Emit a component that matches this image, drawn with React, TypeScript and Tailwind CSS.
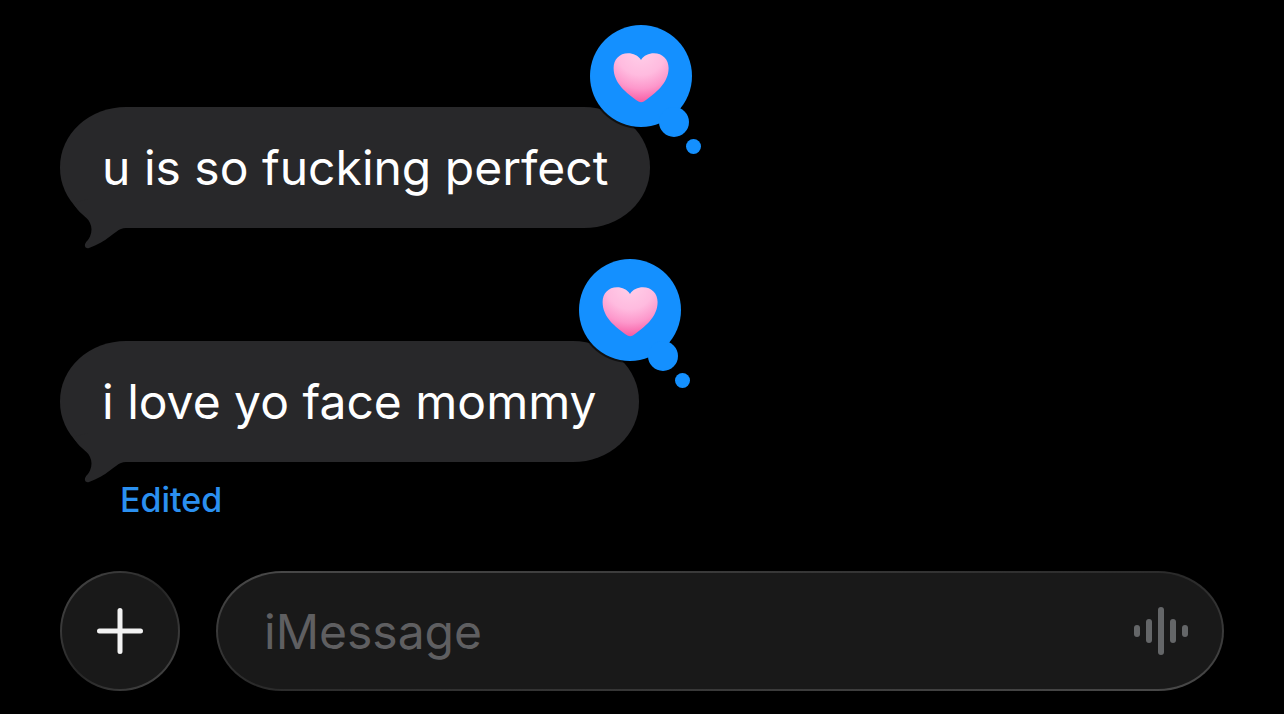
import React from 'react';
import { clsx } from 'clsx';

interface Message {
  text: string;
  edited?: boolean;
}

const messages: Message[] = [
  { text: 'u is so fucking perfect' },
  { text: 'i love yo face mommy', edited: true },
];

const HeartReaction: React.FC<{ id: string }> = ({ id }) => (
  <svg
    role="img"
    aria-label="Heart reaction"
    viewBox="0 0 114 132"
    className="absolute -top-[84px] -right-[52px] h-[132px] w-[114px]"
  >
    <defs>
      <radialGradient id={id} gradientUnits="userSpaceOnUse" cx="53" cy="28" r="54">
        <stop offset="0" stopColor="#ffd0e9" />
        <stop offset="0.45" stopColor="#ffbbdf" />
        <stop offset="0.7" stopColor="#fd97cb" />
        <stop offset="1" stopColor="#f7509c" />
      </radialGradient>
    </defs>
    <circle cx="53" cy="53" r="53" fill="#000" fillOpacity="0.6" />
    <circle cx="53" cy="53" r="51" fill="#1490ff" />
    <circle cx="86" cy="99" r="15" fill="#1490ff" />
    <circle cx="105.5" cy="123.5" r="7.5" fill="#1490ff" />
    <path
      d="M53 37C50 32.5 45.5 30.3 40 30.3C31.5 30.3 25.6 36.5 25.6 45C25.6 60 38 70 50.5 78.5C52.3 79.5 54 79.5 55.800 78.5C68 70 80.6 60 80.6 45C80.6 36.5 74.5 30.3 66 30.3C60.5 30.3 56 32.5 53 37Z"
      fill={`url(#${id})`}
    />
  </svg>
);

const Bubble: React.FC<{ message: Message; id: string }> = ({ message, id }) => (
  <div className="relative rounded-[66px/60px] bg-[#28282a] px-[42px] pt-[31px] pb-[30px]">
    <p className="text-[48px] leading-[60px] text-white">{message.text}</p>
    <svg
      aria-hidden="true"
      viewBox="0 0 70 50"
      className="absolute -bottom-[21px] left-2 h-[50px] w-[70px]"
    >
      <path
        d="M5 4C8 9 11 12.5 14 15C18 18.5 20.5 20.5 22 24C24 28 24 33 22 37.5C20.5 41 18.5 42 17.3 44.5C16 47.500 18 50 21 49C25 47.5 29 45.5 33 43.5C40 39.5 43 36.5 48 33C52 30 54 29 58 29H70V0H20Z"
        fill="#28282a"
      />
    </svg>
    <HeartReaction id={id} />
  </div>
);

const Waveform: React.FC = () => (
  <svg viewBox="0 0 54 48" className="h-12 w-[54px]" fill="#646668" aria-hidden="true">
    <rect x="0" y="18" width="6" height="12" rx="3" />
    <rect x="12" y="12" width="6" height="24" rx="3" />
    <rect x="24" y="0" width="6" height="48" rx="3" />
    <rect x="36" y="12" width="6" height="24" rx="3" />
    <rect x="48" y="18" width="6" height="12" rx="3" />
  </svg>
);

const Composer: React.FC = () => (
  <form className="flex items-center gap-9" onSubmit={(e) => e.preventDefault()}>
    <button
      type="button"
      aria-label="Add attachment"
      className="shrink-0 rounded-full bg-[linear-gradient(135deg,#4a4a4a,#262626_50%,#4a4a4a)] p-0.5"
    >
      <span className="flex size-[116px] items-center justify-center rounded-full bg-[#191919]">
        <svg viewBox="0 0 46 46" className="size-[46px]" stroke="#f2f2f2" strokeWidth="5" strokeLinecap="round" aria-hidden="true">
          <path d="M23 2.5V43.5M2.5 23H43.5" />
        </svg>
      </span>
    </button>
    <div className="min-w-0 flex-1 rounded-[66px/60px] bg-[linear-gradient(to_bottom_right,#4a4a4a,#363636_30%,#2a2a2a_50%,#363636_70%,#4a4a4a)] p-0.5">
      <div className="flex h-[116px] items-center gap-6 rounded-[64px/58px] bg-[#191919] pr-[34px] pl-[46px]">
        <input
          type="text"
          aria-label="iMessage"
          placeholder="iMessage"
          className="h-full min-w-0 flex-1 bg-transparent text-[48px] text-white outline-none placeholder:text-[#5f5f61]"
        />
        <button type="button" aria-label="Record audio">
          <Waveform />
        </button>
      </div>
    </div>
  </form>
);

export default function App() {
  return (
    <main className="min-h-screen bg-black px-[60px] pt-[107px] pb-[23px] font-['Inter','Liberation_Sans',sans-serif]">
      <ul className="mb-[51px] flex flex-col gap-[113px]">
        {messages.map((message, i) => (
          <li key={message.text} className="flex flex-col items-start">
            <Bubble message={message} id={`heart-${i}`} />
            <div className={clsx('pl-[60px]', message.edited && 'pt-[18px]')}>
              {message.edited && (
                <button type="button" className="block text-[34px] leading-10 font-medium text-[#2b90f0]">
                  Edited
                </button>
              )}
            </div>
          </li>
        ))}
      </ul>
      <Composer />
    </main>
  );
}
